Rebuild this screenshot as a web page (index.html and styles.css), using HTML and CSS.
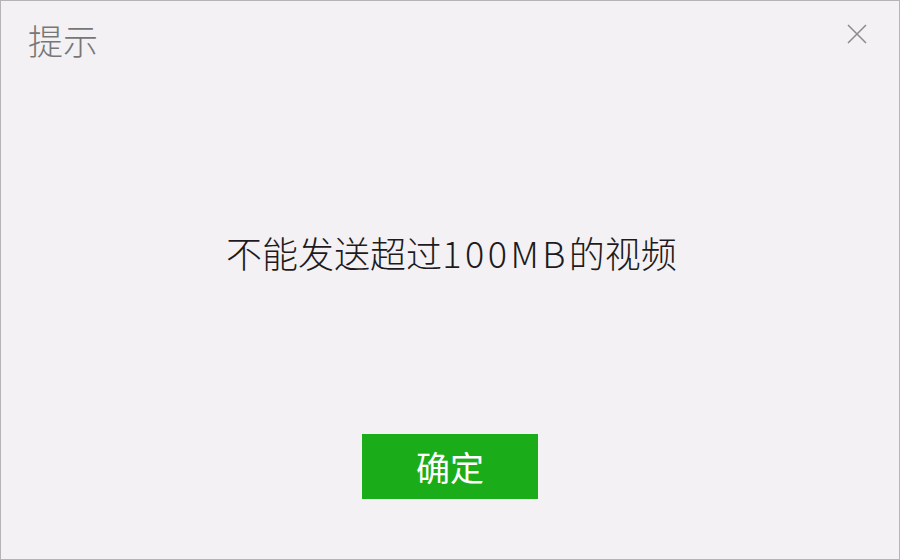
FILE: index.html
```html
<!DOCTYPE html>
<html lang="zh-CN">
<head>
<meta charset="utf-8">
<title>提示</title>
<link rel="stylesheet" href="styles.css">
</head>
<body>
<div class="dialog">
  <div class="header">
    <div class="title">提示</div>
    <div class="close" aria-label="关闭">
      <svg width="20" height="20" viewBox="0 0 20 20"><path d="M1 1 L19 19 M19 1 L1 19" stroke="#8a8a8a" stroke-width="1.5" fill="none"/></svg>
    </div>
  </div>
  <div class="message">不能发送超过<span class="latin">100MB</span>的视频</div>
  <div class="actions">
    <button class="ok">确定</button>
  </div>
</div>
</body>
</html>
```
FILE: styles.css
```css
html, body {
  margin: 0;
  padding: 0;
  width: 900px;
  height: 560px;
  overflow: hidden;
  background: #f3f1f3;
}
.dialog {
  box-sizing: border-box;
  width: 900px;
  height: 560px;
  border: 1px solid #b4b4b4;
  background: #f3f1f3;
  display: flex;
  flex-direction: column;
  font-family: "Noto Sans CJK SC", "Noto Sans", sans-serif;
}
.header {
  display: flex;
  justify-content: space-between;
  align-items: flex-start;
  padding: 15px 32px 0 27px;
  height: 60px;
}
.title {
  font-size: 35px;
  line-height: 48px;
  font-weight: 300;
  color: #777;
}
.close {
  margin-top: 8px;
  width: 20px;
  height: 20px;
}
.close svg { display: block; }
.message {
  margin-top: 151px;
  text-align: center;
  font-size: 36px;
  line-height: 50px;
  font-weight: 300;
  color: #1e1a20;
  padding-left: 3px;
}
.latin {
  letter-spacing: 3.5px;
}
.actions {
  display: flex;
  justify-content: center;
  margin-top: 157px;
}
.ok {
  width: 176px;
  height: 65px;
  border: none;
  margin: 0;
  padding: 0;
  background: #1aad19;
  color: #fff;
  font-family: "Noto Sans CJK SC", "Noto Sans", sans-serif;
  font-size: 34px;
  font-weight: 400;
  cursor: pointer;
}
```
